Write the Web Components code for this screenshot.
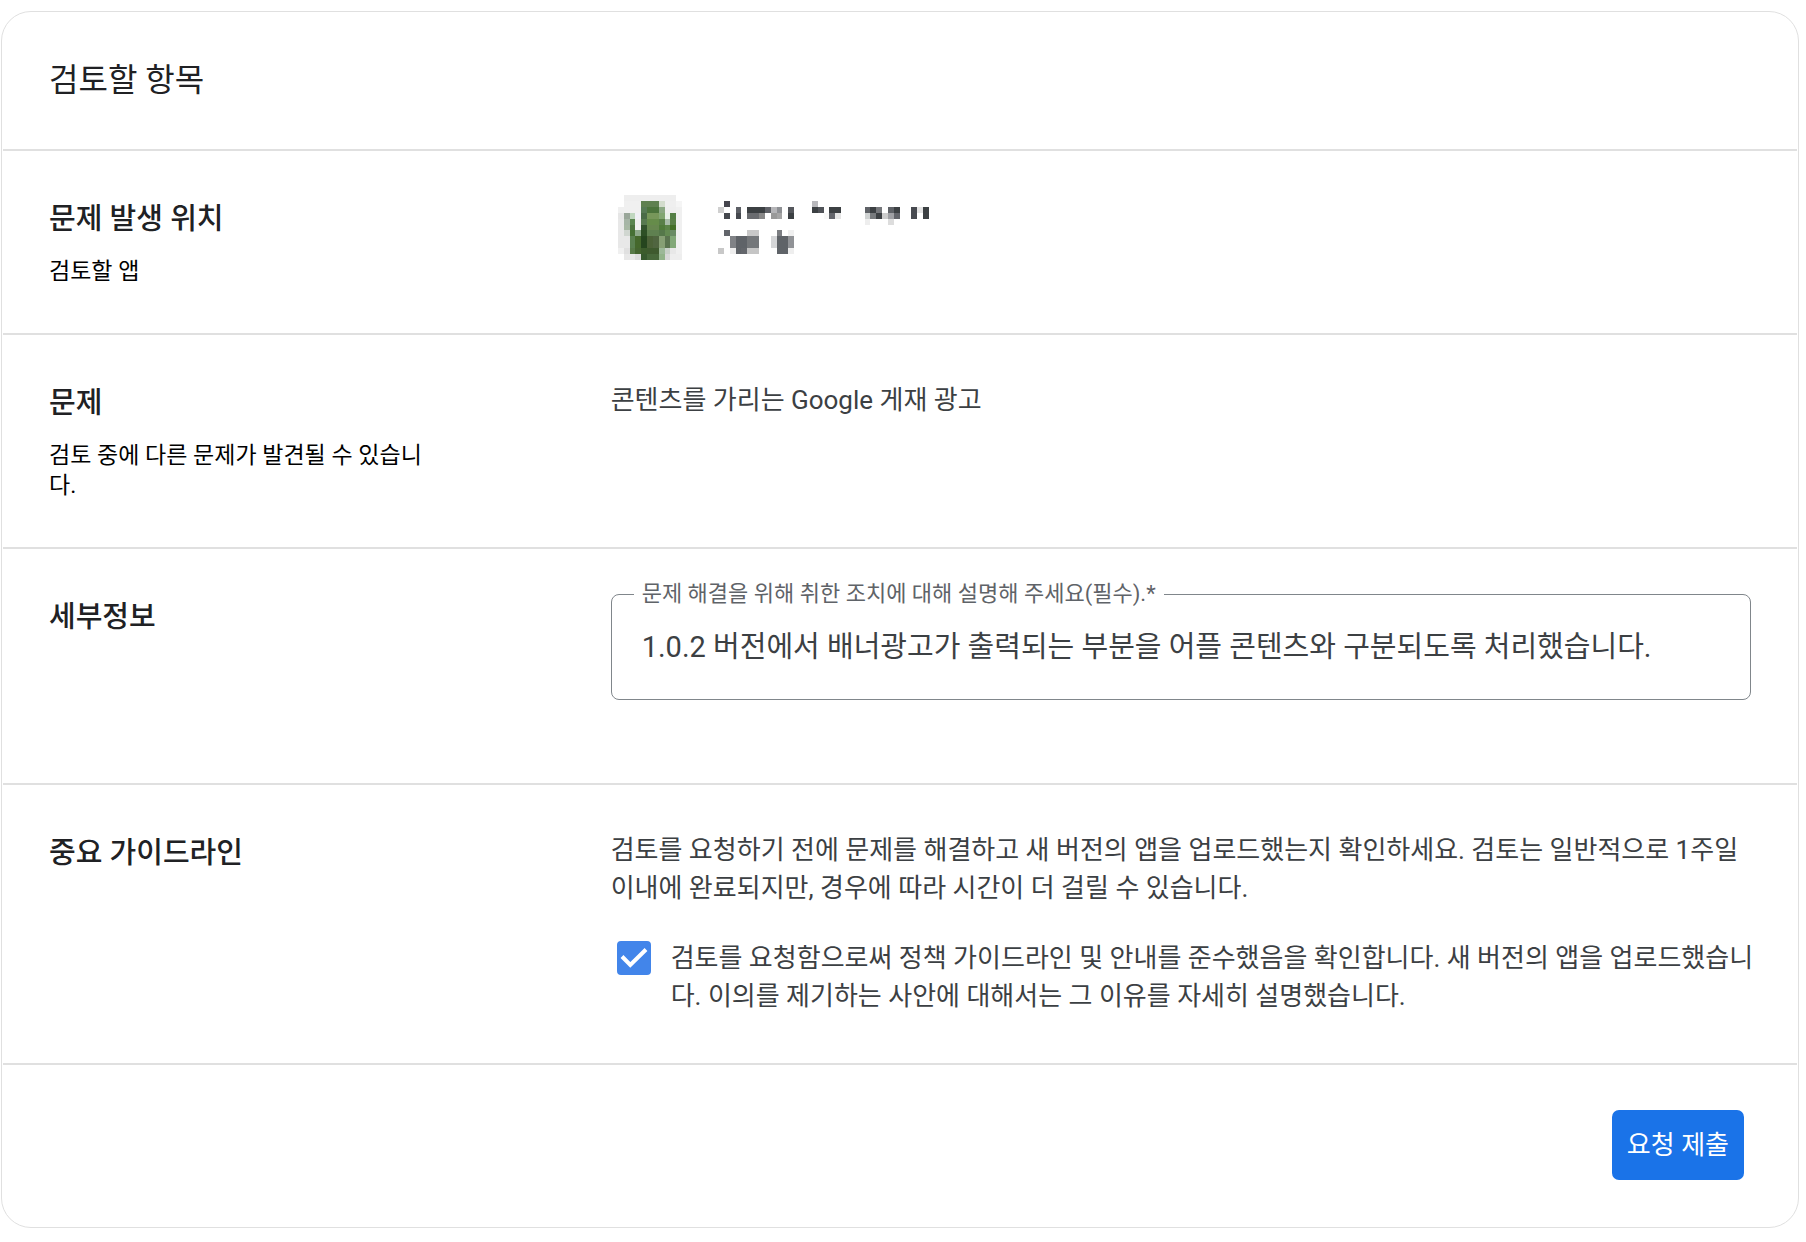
<!DOCTYPE html>
<html lang="ko">
<head>
<meta charset="utf-8">
<meta name="viewport" content="width=device-width, initial-scale=1">
<title>검토 요청</title>
<style>
    body {
        margin: 11px 7px 14px 1px;
        background: #fff;
        color: #3c4043;
        font-family: Roboto, "Noto Sans CJK KR", sans-serif;
        font-size: 26px;
        line-height: 38px;
    }

    p {
        margin: 0;
    }
</style>
</head>
<body>
<review-card heading="검토할 항목">
    <review-row heading="문제 발생 위치" note="검토할 앱">
        <app-summary></app-summary>
    </review-row>
    <review-row heading="문제" note="검토 중에 다른 문제가 발견될 수 있습니다.">
        <p>콘텐츠를 가리는 Google 게재 광고</p>
    </review-row>
    <review-row heading="세부정보">
        <outlined-field label="문제 해결을 위해 취한 조치에 대해 설명해 주세요(필수).*" value="1.0.2 버전에서 배너광고가 출력되는 부분을 어플 콘텐츠와 구분되도록 처리했습니다."></outlined-field>
    </review-row>
    <review-row heading="중요 가이드라인">
        <p>검토를 요청하기 전에 문제를 해결하고 새 버전의 앱을 업로드했는지 확인하세요. 검토는 일반적으로 1주일 이내에 완료되지만, 경우에 따라 시간이 더 걸릴 수 있습니다.</p>
        <check-option checked>검토를 요청함으로써 정책 가이드라인 및 안내를 준수했음을 확인합니다. 새 버전의 앱을 업로드했습니다. 이의를 제기하는 사안에 대해서는 그 이유를 자세히 설명했습니다.</check-option>
    </review-row>
    <submit-button slot="footer">요청 제출</submit-button>
</review-card>

<script>
// Card with a title, rows and a footer
class ReviewCard extends HTMLElement {
    constructor() {
        super();
        this.attachShadow({ mode: 'open' });
    }

    connectedCallback() {
        this.shadowRoot.innerHTML = `
        <style>
            :host {
                display: block;
                border: 1px solid #e0e0e0;
                border-radius: 30px;
                padding: 0 1px;
            }

            h1 {
                margin: 0;
                padding: 48px 46px 49px;
                font-size: 32px;
                font-weight: 400;
                line-height: 40px;
                color: #202124;
            }

            footer {
                display: flex;
                justify-content: flex-end;
                padding: 45px 53px 47px 46px;
                border-top: 2px solid #e0e0e0;
            }
        </style>
        <h1>${this.getAttribute('heading')}</h1>
        <slot></slot>
        <footer><slot name="footer"></slot></footer>
        `;
    }
}

// Row: heading and note on the left, content on the right
class ReviewRow extends HTMLElement {
    constructor() {
        super();
        this.attachShadow({ mode: 'open' });
    }

    connectedCallback() {
        const note = this.getAttribute('note');

        this.shadowRoot.innerHTML = `
        <style>
            :host {
                display: grid;
                grid-template-columns: 33% 1fr;
                padding: 46px;
                border-top: 2px solid #e0e0e0;
            }

            .info {
                display: flex;
                flex-direction: column;
                gap: 16px;
                padding-right: 30%;
            }

            h2 {
                margin: 0;
                font-size: 29px;
                font-weight: 500;
                line-height: 44px;
                color: #202124;
            }

            .note {
                margin: 0;
                font-size: 23px;
                line-height: 30px;
                color: #000;
            }

            .content {
                display: flex;
                flex-direction: column;
                gap: 32px;
                min-width: 0;
            }
        </style>
        <div class="info">
            <h2>${this.getAttribute('heading')}</h2>
            ${note ? `<p class="note">${note}</p>` : ''}
        </div>
        <div class="content"><slot></slot></div>
        `;
    }
}

// App icon and name, both shown as coarse mosaics.
// Each icon row is a list of colours, each name cell is [column, row, width, height, colour]
const ICON = [
    '- eee eee eee eee eee eee eee eee eee -',
    '- f0f0f0 f0f0f0 f0f0f0 5f8050 5f8050 5f8050 d3dccd efefef efefef f5f5f5',
    'f0f0f0 f0f0f0 f0f0f0 f0f0f0 577a55 4c743c 4c743c 8ba883 eee eee f0f0f0',
    'e6e6e6 9aa79a c0d7bf f0f0f5 4a6b47 77975a 77975a 82a672 e8f0e8 557f45 f0f0f0',
    'e8e8e8 a6b5a6 5a8550 eee 587a50 668c4a 668c4a 5a8048 a9bda8 5a8048 f0f0f0',
    'e8e8e8 a8b8a5 4d7440 f0f0f0 33532d 67874f 67874f 507b3a 5d8548 447028 f0f0f0',
    'e8e8e8 d0d6d0 467035 8da88a 2d4f25 5f8050 5f8050 55784a 638a52 6a8c65 f0f0f0',
    'e8e8e8 e8e8e8 5a8050 45682c 25451e 4c6238 506540 869f74 5a744f 82a878 f0f0f0',
    'e8e8e8 e8e8e8 5a8050 45682c 25451e 4c6238 506540 869f74 5a744f 82a878 f0f0f0',
    'f0f0f0 e0e0e0 587a48 456530 3c5c2c 3e5a2e 3e5a2e 9cb898 c8d0c8 e8e8e8 f0f0f0',
    '- e8e8e8 e8e8e8 ddd 37592e 47683a 47683a 92b38a d8d8d8 eee eee'
];

const NAME = [
    [1, 0, 1, 1, '45454d'], [16, 0, 1, 1, 'b8b8bc'],
    [0, 1, 1, 1, 'd0d0d0'], [3, 1, 1, 1, '5c5f65'], [5, 1, 3, 1, '3c4043'], [8, 1, 1, 1, '606268'],
    [9, 1, 1, 1, 'b5b5b8'], [10, 1, 1, 1, '8e9094'], [12, 1, 1, 1, '55575c'], [16, 1, 1, 1, '3c4043'],
    [17, 1, 1, 1, '505358'], [19, 1, 2, 1, '3c4043'], [25, 1, 1, 1, '5f6267'], [26, 1, 1, 1, '3c4043'],
    [27, 1, 1, 1, '75777b'], [29, 1, 1, 1, '5f6267'], [30, 1, 1, 1, '3c4043'], [33, 1, 1, 1, '474a50'],
    [34, 1, 1, 1, 'e4e4e4'], [35, 1, 1, 1, '3c4043'],
    [1, 2, 1, 1, '45484e'], [3, 2, 1, 1, '45484e'], [5, 2, 2, 1, '6a6c70'], [7, 2, 1, 1, '888'],
    [9, 2, 1, 1, '999'], [10, 2, 1, 1, 'a5a5a5'], [12, 2, 1, 1, '3c4043'], [18, 2, 1, 1, 'f9f9f9'],
    [19, 2, 1, 1, '63656b'], [20, 2, 1, 1, 'e5e5e5'], [25, 2, 1, 1, 'cfd2d2'], [26, 2, 1, 1, '777a7d'],
    [27, 2, 1, 1, '3c4043'], [28, 2, 1, 1, 'ccc'], [29, 2, 1, 1, '9fa0a4'], [30, 2, 1, 1, '63656b'],
    [33, 2, 1, 1, '474a50'], [35, 2, 1, 1, '3c4043'],
    [25, 3, 1, 1, 'eee'], [29, 3, 1, 1, 'ddd'],
    [1, 5, 1, 1, '62656b'], [5, 5, 2, 1, 'c8c8c8'], [10, 5, 1, 1, '7c7e82'], [12, 5, 1, 1, 'f0f0f0'],
    [2, 6, 1, 2, '808286'], [3, 6, 2, 2, '5f6368'], [5, 6, 2, 2, '74777a'], [9, 6, 1, 2, 'd5d6d8'],
    [10, 6, 2, 2, '5f6368'], [12, 6, 1, 2, '909296'],
    [0, 8, 1, 1, 'c8c8c8'], [2, 8, 1, 1, 'eee'], [3, 8, 1, 1, '5f6368'], [4, 8, 1, 1, '63666b'],
    [5, 8, 2, 1, 'c5c5c5'], [10, 8, 2, 1, '5f6368'], [12, 8, 1, 1, 'eee']
];

class AppSummary extends HTMLElement {
    constructor() {
        super();
        this.attachShadow({ mode: 'open' });
    }

    connectedCallback() {
        const rect = ([x, y, w, h, color]) =>
            `<rect x="${x}" y="${y}" width="${w}" height="${h}" fill="#${color}"/>`;
        const icon = ICON.flatMap((line, y) =>
            line.split(' ').map((color, x) => color === '-' ? '' : rect([x, y, 1, 1, color])));

        this.shadowRoot.innerHTML = `
        <style>
            :host {
                display: flex;
                gap: 36px;
                align-items: center;
                height: 61px;
                padding-left: 7px;
            }

            svg {
                display: block;
                shape-rendering: crispEdges;
            }
        </style>
        <svg width="64" height="65" viewBox="0 0 11 11" preserveAspectRatio="none" aria-hidden="true">${icon.join('')}</svg>
        <svg width="211" height="53" viewBox="0 0 36 9" preserveAspectRatio="none" aria-hidden="true">${NAME.map(rect).join('')}</svg>
        `;
    }
}

// Outlined text box, the label sits in the border
class OutlinedField extends HTMLElement {
    constructor() {
        super();
        this.attachShadow({ mode: 'open' });
    }

    connectedCallback() {
        this.shadowRoot.innerHTML = `
        <style>
            :host {
                display: block;
                margin: -16px 0 37px;
            }

            fieldset {
                min-width: 0;
                margin: 0;
                padding: 0 22px 18px;
                border: 1px solid #80868b;
                border-radius: 8px;
            }

            legend {
                padding: 0 8px;
                font-size: 22px;
                line-height: 30px;
                color: #5f6368;
            }

            textarea {
                display: block;
                box-sizing: border-box;
                width: 100%;
                height: 72px;
                margin: 0;
                padding: 18px 8px 14px;
                border: 0;
                outline: 0;
                resize: none;
                overflow: hidden;
                background: transparent;
                color: #3c4043;
                font: inherit;
                font-size: 29px;
                line-height: 40px;
            }
        </style>
        <fieldset>
            <legend><label for="details">${this.getAttribute('label')}</label></legend>
            <textarea id="details" rows="1" required>${this.getAttribute('value')}</textarea>
        </fieldset>
        `;
    }
}

// Checkbox with its text
class CheckOption extends HTMLElement {
    constructor() {
        super();
        this.attachShadow({ mode: 'open' });
    }

    connectedCallback() {
        this.shadowRoot.innerHTML = `
        <style>
            :host {
                display: block;
                margin-right: -8px;
                padding: 0 0 2px 6px;
            }

            label {
                display: flex;
                gap: 20px;
                align-items: flex-start;
            }

            .box {
                display: grid;
                flex: none;
                margin-top: 2px;
            }

            .box > * {
                grid-area: 1 / 1;
            }

            input {
                appearance: none;
                width: 34px;
                height: 34px;
                margin: 0;
                border: 2px solid #5f6368;
                border-radius: 4px;
            }

            input:checked {
                border-color: #4285ea;
                background: #4285ea;
            }

            svg {
                pointer-events: none;
            }

            input:not(:checked) + svg {
                visibility: hidden;
            }
        </style>
        <label>
            <span class="box">
                <input type="checkbox" ${this.hasAttribute('checked') ? 'checked' : ''}>
                <svg width="34" height="34" viewBox="0 0 34 34" fill="none" stroke="#fff" stroke-width="4" aria-hidden="true">
                    <path d="M5 15.5 13.3 24 29 8.5"/>
                </svg>
            </span>
            <span><slot></slot></span>
        </label>
        `;
    }
}

class SubmitButton extends HTMLElement {
    constructor() {
        super();
        this.attachShadow({ mode: 'open' });
    }

    connectedCallback() {
        this.shadowRoot.innerHTML = `
        <style>
            :host {
                display: block;
            }

            button {
                display: block;
                margin: 0;
                padding: 16px 15px;
                border: 0;
                border-radius: 7px;
                background: #1a73e8;
                color: #fff;
                font: inherit;
                cursor: pointer;
            }
        </style>
        <button type="button"><slot></slot></button>
        `;
    }
}

customElements.define('review-card', ReviewCard);
customElements.define('review-row', ReviewRow);
customElements.define('app-summary', AppSummary);
customElements.define('outlined-field', OutlinedField);
customElements.define('check-option', CheckOption);
customElements.define('submit-button', SubmitButton);
</script>
</body>
</html>
